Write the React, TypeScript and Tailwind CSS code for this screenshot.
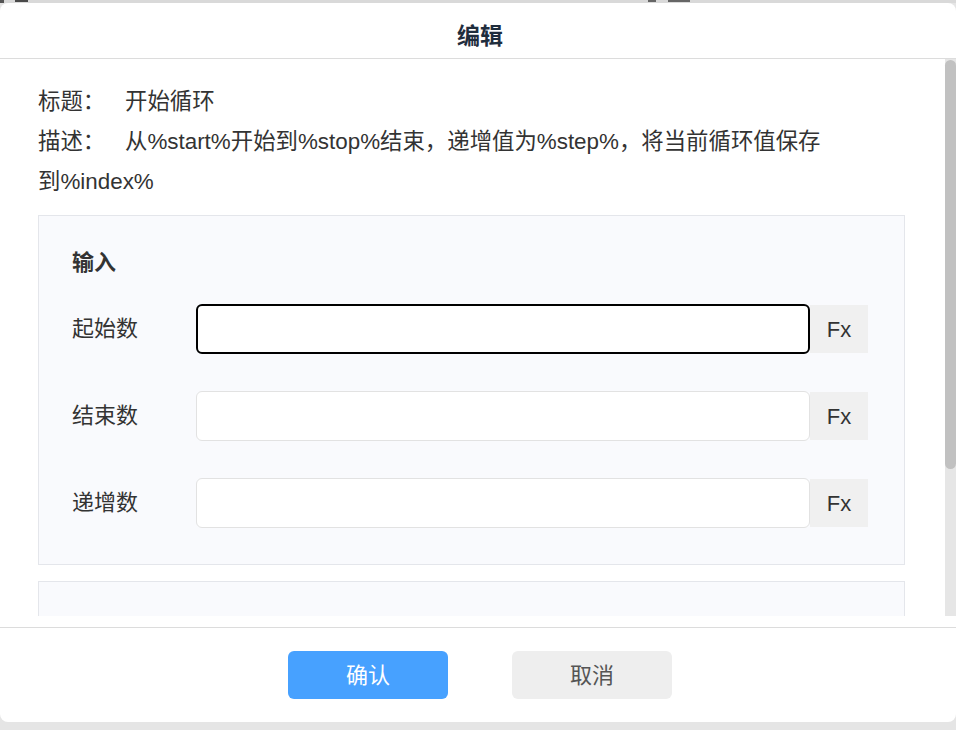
import React from 'react'

const font = { fontFamily: '"Liberation Sans", "Noto Sans CJK SC", sans-serif' }

function FieldRow({ label, focused }: { label: string; focused?: boolean }) {
  return (
    <div className="flex items-center">
      <div className="w-[124px] shrink-0 text-[22px] leading-[30px] text-[#333]">{label}</div>
      <div className="flex items-center">
        <input
          className={`w-[614px] h-[50px] rounded-[6px] bg-white outline-none px-3 text-[20px] ${focused ? 'border-2 border-black' : 'border border-[#e2e2e2]'}`}
        />
        <div className="w-[58px] h-[48px] bg-[#f0f0f0] flex items-center justify-center text-[22px] text-[#333]">Fx</div>
      </div>
    </div>
  )
}

export default function App() {
  return (
    <div className="w-[956px] h-[730px] bg-[#e5e5e5] overflow-hidden" style={font}>
      {/* strip of the page behind the dialog */}
      <div className="h-[3px] bg-[#d9d9d9] flex">
        <span className="w-[4px] h-[3px] bg-[#555]"></span>
        <span className="ml-[11px] w-[13px] h-[2px] bg-[#4a4a4a]"></span>
        <span className="ml-[620px] w-[8px] h-[2px] bg-[#666]"></span>
        <span className="ml-[12px] w-[22px] h-[2px] bg-[#666]"></span>
      </div>

      <div className="w-[956px] h-[719px] bg-white rounded-lg flex flex-col">
        {/* header */}
        <div className="h-[56px] shrink-0 border-b border-[#dcdcdc] flex items-center justify-center pt-[10px] pl-1">
          <span className="text-[23px] leading-[30px] font-bold text-[#1f2d3d]">编辑</span>
        </div>

        {/* body */}
        <div className="h-[557px] shrink-0 flex">
          <div className="flex-1 overflow-hidden">
            <div className="pl-[38px] pr-[40px] pt-[23px]">
              <div className="text-[22.4px] leading-[40px] text-[#333]">
                <span className="inline-block w-[87px]">标题：</span>开始循环
              </div>
              <div className="text-[22.4px] leading-[40px] text-[#333]">
                <span className="inline-block w-[87px]">描述：</span>从%start%开始到%stop%结束，递增值为%step%，将当前循环值保存到%index%
              </div>

              <div className="mt-[13px] border border-[#e4e6eb] bg-[#f9fafd] pl-[33px] pr-[36px] pt-[32px] pb-[36px]">
                <div className="text-[22px] leading-[30px] font-bold text-[#333]">输入</div>
                <div className="mt-[26px] flex flex-col gap-[37px]">
                  <FieldRow label="起始数" focused />
                  <FieldRow label="结束数" />
                  <FieldRow label="递增数" />
                </div>
              </div>

              {/* next section, scrolled out of view */}
              <div className="mt-[16px] h-[200px] border border-[#e4e6eb] bg-[#f9fafd]"></div>
            </div>
          </div>
          {/* scrollbar */}
          <div className="w-[11px] shrink-0 bg-[#e6e6e6] flex flex-col">
            <div className="mt-[1px] h-[409px] bg-[#c1c1c1] rounded-[6px]"></div>
          </div>
        </div>

        {/* footer */}
        <div className="mt-[11px] h-[95px] shrink-0 border-t border-[#dcdcdc] flex items-center justify-center gap-[64px] pl-1">
          <button className="w-[160px] h-[48px] rounded-[6px] bg-[#47a1ff] text-white text-[22px]">确认</button>
          <button className="w-[160px] h-[48px] rounded-[6px] bg-[#eeeeee] text-[#555] text-[22px]">取消</button>
        </div>
      </div>
    </div>
  )
}
